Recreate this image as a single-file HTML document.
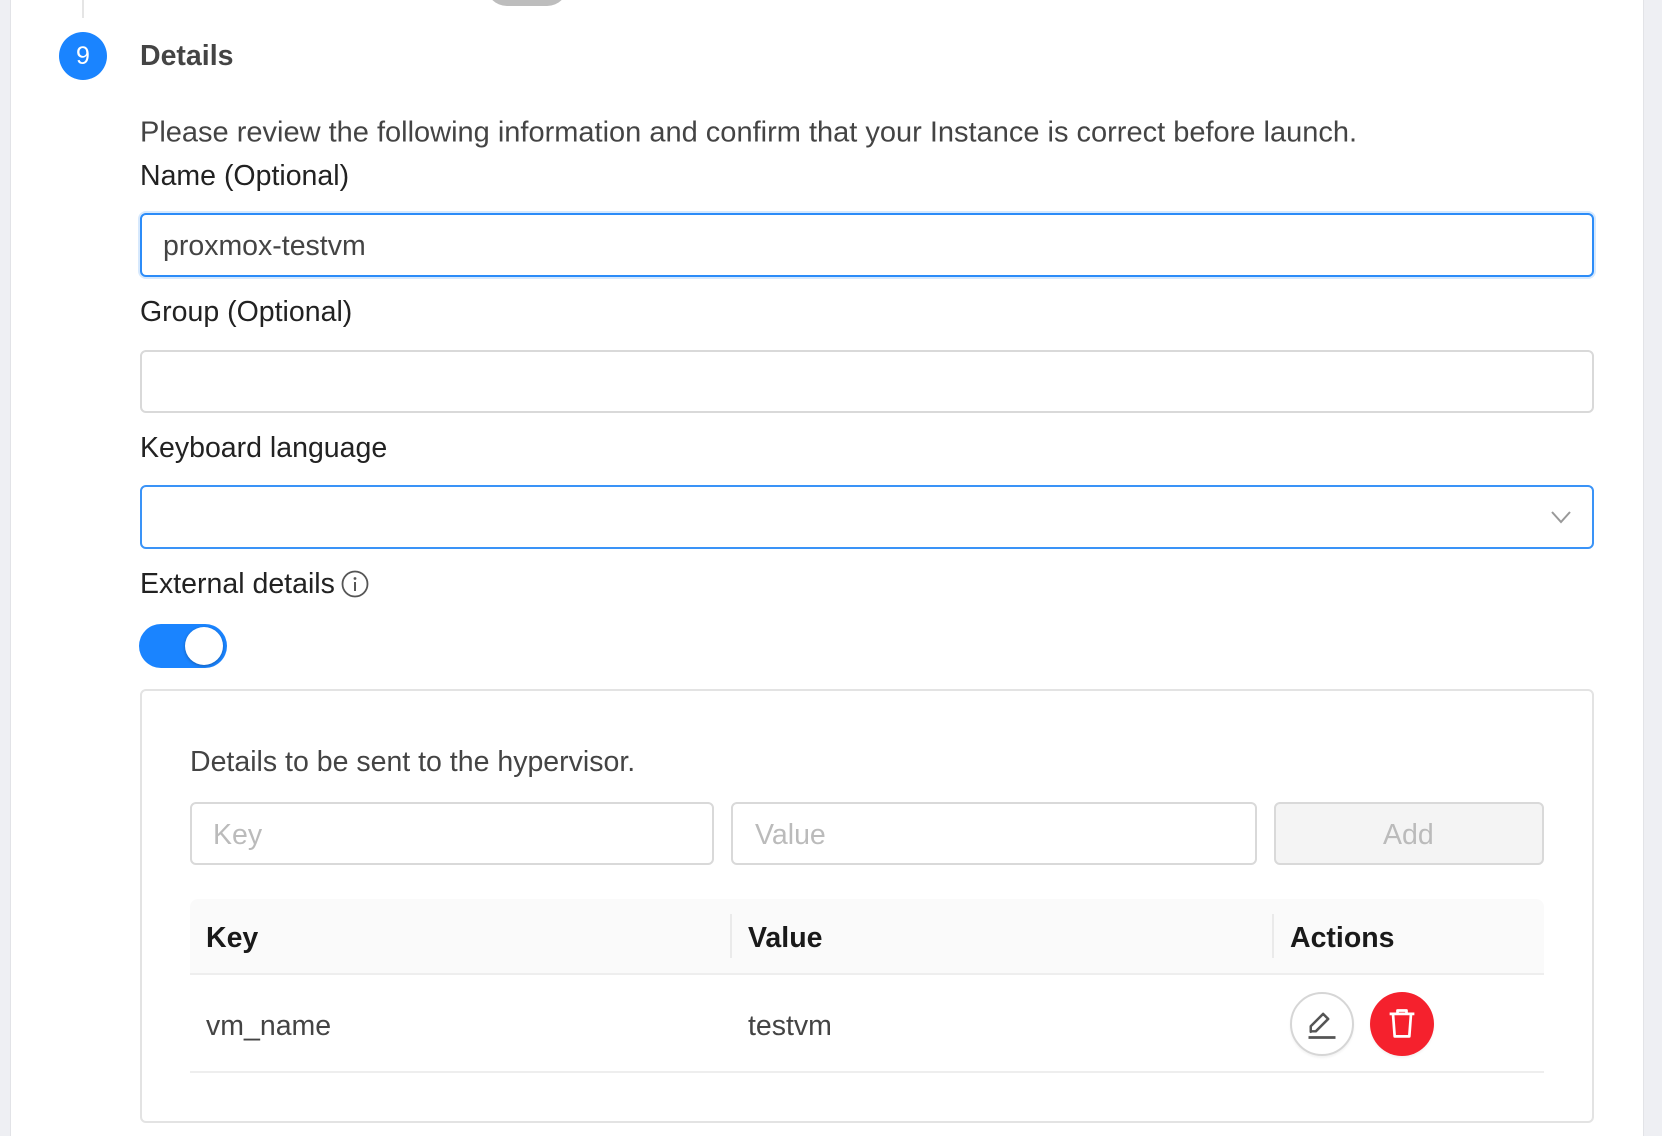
<!DOCTYPE html>
<html><head><meta charset="utf-8"><style>
*{box-sizing:border-box;margin:0;padding:0}
body{width:1662px;height:1136px;overflow:hidden;background:#fff;font-family:"Liberation Sans",sans-serif;position:relative;color:#222}
.a{position:absolute}
.t{position:absolute;white-space:nowrap;line-height:1;transform:translateY(-50%)}
.inp{position:absolute;border:2px solid #d9d9d9;border-radius:6px;background:#fff}
.lbl{font-size:28.5px;color:#222}
</style></head><body>
<div class="a" style="left:0;top:0;width:11px;height:1136px;background:#eeeff3;border-right:1px solid #e2e3e7"></div>
<div class="a" style="left:1643px;top:0;width:19px;height:1136px;background:#eeeff3;border-left:1px solid #e2e3e7"></div>
<div class="a" style="left:82px;top:0;width:2px;height:18px;background:#e5e5e5"></div>
<div class="a" style="left:486px;top:-36px;width:82px;height:42px;border-radius:21px;background:#bdbdbd"></div>
<div class="a" style="left:59px;top:32px;width:48px;height:48px;border-radius:50%;background:#1a84ff;color:#fff;font-size:25px;text-align:center;line-height:48px">9</div>
<div class="t" style="left:140px;top:56px;font-size:28.5px;font-weight:bold;color:#444">Details</div>
<div class="t" style="left:140px;top:133px;font-size:29px;color:#444">Please review the following information and confirm that your Instance is correct before launch.</div>
<div class="t lbl" style="left:140px;top:176px">Name (Optional)</div>
<div class="inp" style="left:140px;top:213px;width:1454px;height:64px;border-color:#2c8cf8;box-shadow:0 0 0 2px #d7e9fd"></div>
<div class="t" style="left:163px;top:246px;font-size:28.5px;color:#444">proxmox-testvm</div>
<div class="t lbl" style="left:140px;top:312px">Group (Optional)</div>
<div class="inp" style="left:140px;top:350px;width:1454px;height:63px"></div>
<div class="t lbl" style="left:140px;top:448px">Keyboard language</div>
<div class="inp" style="left:140px;top:485px;width:1454px;height:64px;border-color:#3a93f7"></div>
<svg class="a" style="left:1550px;top:507px" width="22" height="20" viewBox="0 0 22 20"><path d="M2 5l9 10 9-10" fill="none" stroke="#999" stroke-width="2"/></svg>
<div class="t lbl" style="left:140px;top:584px">External details</div>
<svg class="a" style="left:341px;top:570px" width="28" height="28" viewBox="0 0 28 28"><circle cx="14" cy="14" r="12.5" fill="none" stroke="#555" stroke-width="1.8"/><circle cx="14" cy="8.5" r="1.4" fill="#555"/><path d="M14 12v9" stroke="#555" stroke-width="2"/></svg>
<div class="a" style="left:139px;top:624px;width:88px;height:44px;border-radius:22px;background:#1a84ff"></div>
<div class="a" style="left:185px;top:627px;width:38px;height:38px;border-radius:50%;background:#fff;box-shadow:0 1px 3px rgba(0,0,0,.3)"></div>
<div class="a" style="left:140px;top:689px;width:1454px;height:434px;border:2px solid #e3e3e3;border-radius:6px"></div>
<div class="t" style="left:190px;top:762px;font-size:28.5px;color:#444">Details to be sent to the hypervisor.</div>
<div class="inp" style="left:190px;top:802px;width:524px;height:63px"></div>
<div class="t" style="left:213px;top:835px;font-size:28.5px;color:#bbb">Key</div>
<div class="inp" style="left:731px;top:802px;width:526px;height:63px"></div>
<div class="t" style="left:755px;top:835px;font-size:28.5px;color:#bbb">Value</div>
<div class="inp" style="left:1274px;top:802px;width:270px;height:63px;background:#f4f4f4"></div>
<div class="t" style="left:1383px;top:835px;font-size:28.5px;color:#bbb">Add</div>
<div class="a" style="left:190px;top:899px;width:1354px;height:76px;background:#fafafa;border-radius:8px 8px 0 0;border-bottom:2px solid #eee"></div>
<div class="a" style="left:730px;top:914px;width:2px;height:44px;background:#eaeaea"></div>
<div class="a" style="left:1272px;top:914px;width:2px;height:44px;background:#eaeaea"></div>
<div class="t" style="left:206px;top:938px;font-size:28.5px;font-weight:bold;color:#1a1a1a">Key</div>
<div class="t" style="left:748px;top:938px;font-size:28.5px;font-weight:bold;color:#1a1a1a">Value</div>
<div class="t" style="left:1290px;top:938px;font-size:28.5px;font-weight:bold;color:#1a1a1a">Actions</div>
<div class="a" style="left:190px;top:1071px;width:1354px;height:2px;background:#eee"></div>
<div class="t" style="left:206px;top:1026px;font-size:28.5px;color:#444">vm_name</div>
<div class="t" style="left:748px;top:1026px;font-size:28.5px;color:#444">testvm</div>
<div class="a" style="left:1290px;top:992px;width:64px;height:64px;border-radius:50%;border:2px solid #d6d6d6;background:#fff;box-shadow:0 2px 2px rgba(0,0,0,.05)"></div>
<svg class="a" style="left:1304px;top:1006px" width="36" height="36" viewBox="0 0 32 32"><path d="M6 23v-5L17 7l4.5 4.5L10.5 22.5H6z" fill="none" stroke="#555" stroke-width="2.2" stroke-linejoin="round"/><path d="M4 28h24" stroke="#555" stroke-width="2.4"/></svg>
<div class="a" style="left:1370px;top:992px;width:64px;height:64px;border-radius:50%;background:#f5212d;box-shadow:0 2px 2px rgba(0,0,0,.05)"></div>
<svg class="a" style="left:1384px;top:1006px" width="36" height="36" viewBox="0 0 32 32"><path d="M5 7h22M12 7V4h8v3M8 7l1.5 20h13L24 7" fill="none" stroke="#fff" stroke-width="2.4" stroke-linejoin="round"/></svg>
</body></html>
